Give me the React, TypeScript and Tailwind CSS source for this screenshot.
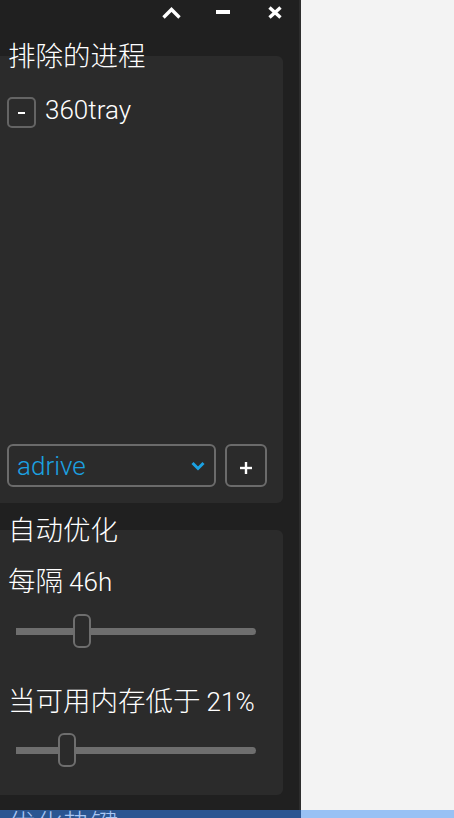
import React from "react"

function TitleBar() {
  return (
    <div className="flex h-[24px] items-center pl-[162px]">
      <svg width="19" height="12" viewBox="0 0 19 12" className="mt-[1px]">
        <polyline points="1.5,10.5 9.5,2.5 17.5,10.5" fill="none" stroke="white" strokeWidth="3.4" />
      </svg>
      <span className="ml-[35px] h-[4px] w-[14px] bg-white" />
      <svg width="14" height="13" viewBox="0 0 14 13" className="ml-[38px]">
        <line x1="1.5" y1="1.5" x2="12.5" y2="11.5" stroke="white" strokeWidth="3.4" />
        <line x1="12.5" y1="1.5" x2="1.5" y2="11.5" stroke="white" strokeWidth="3.4" />
      </svg>
    </div>
  )
}

function Slider({ offset }: { offset: number }) {
  return (
    <div className="ml-[8px] flex h-[34px] w-[240px] items-center">
      <div className="h-[7px] bg-[#6e6e6e]" style={{ width: offset }} />
      <div className="h-[34px] w-[18px] shrink-0 rounded-[6px] border-2 border-[#6e6e6e] bg-[#2b2b2b]" />
      <div className="h-[7px] flex-1 rounded-r-full bg-[#6e6e6e]" />
    </div>
  )
}

// latin bits are set a little smaller than the CJK, like the original
const latin = "font-['Roboto','Noto_Sans',sans-serif] font-light text-[26px]"

export default function App() {
  return (
    <div className="flex h-[818px] w-[454px] overflow-hidden font-['Noto_Sans_CJK_SC','Noto_Sans',sans-serif] font-light text-white">
      <div className="h-[818px] w-[299px] shrink-0 overflow-hidden bg-[#202020]">
        <TitleBar />

        <div className="relative z-10 mt-[14px] h-[32px] pl-[8px] text-[27.5px] leading-[32px]">排除的进程</div>
        <div className="-mt-[14px] flex h-[447px] w-[283px] flex-col rounded-r-[6px] bg-[#2b2b2b] px-[7px] pb-[16px] pt-[38px]">
          <div className="flex items-center">
            <button className="flex h-[31px] w-[29px] items-center justify-center rounded-[5px] border-2 border-[#646464]">
              <span className="h-[2px] w-[7px] bg-white" />
            </button>
            <span className={`mb-[5px] ml-[9px] leading-[32px] ${latin}`}>360tray</span>
          </div>

          <div className="mt-auto flex gap-[9px]">
            <div className="flex h-[43px] w-[209px] items-center justify-between rounded-[6px] border-2 border-[#6b6b6b] pl-[8px] pr-[9px]">
              <span className={`leading-[32px] text-[#1ba1e2] ${latin}`}>adrive</span>
              <svg width="14" height="10" viewBox="0 0 14 10">
                <polyline points="1.5,2 7,7.5 12.5,2" fill="none" stroke="#1ba1e2" strokeWidth="3" />
              </svg>
            </div>
            <button className="flex h-[43px] w-[42px] items-center justify-center rounded-[6px] border-2 border-[#6b6b6b]">
              <svg width="12" height="12" viewBox="0 0 12 12" className="mt-[5px]">
                <line x1="6" y1="0" x2="6" y2="12" stroke="white" strokeWidth="2.4" />
                <line x1="0" y1="6" x2="12" y2="6" stroke="white" strokeWidth="2.4" />
              </svg>
            </button>
          </div>
        </div>

        <div className="relative z-10 mt-[9px] h-[32px] pl-[8px] text-[27.5px] leading-[32px]">自动优化</div>
        <div className="-mt-[14px] h-[265px] w-[283px] rounded-r-[6px] bg-[#2b2b2b] px-[8px] pt-[33px]">
          <div className="h-[32px] text-[27.5px] leading-[32px]">
            每隔 <span className={latin}>46h</span>
          </div>
          <div className="mt-[19px]">
            <Slider offset={57} />
          </div>
          <div className="mt-[35px] h-[32px] text-[27.5px] leading-[32px]">
            当可用内存低于 <span className={latin}>21%</span>
          </div>
          <div className="mt-[18px]">
            <Slider offset={42} />
          </div>
        </div>

        <div className="mt-[15px] h-[40px] bg-[#2b5591] pl-[8px] text-[27.5px] leading-[24px] text-[#a9c6f3]">优化热键</div>
      </div>

      <div className="flex w-[2px] shrink-0 flex-col">
        <div className="flex-1 bg-[#2d2d2d]" />
        <div className="h-[8px] bg-[#2b5591]" />
      </div>

      <div className="flex flex-1 flex-col">
        <div className="flex-1 bg-[#f3f3f3]" />
        <div className="h-[8px] bg-[#99c1f4]" />
      </div>
    </div>
  )
}
